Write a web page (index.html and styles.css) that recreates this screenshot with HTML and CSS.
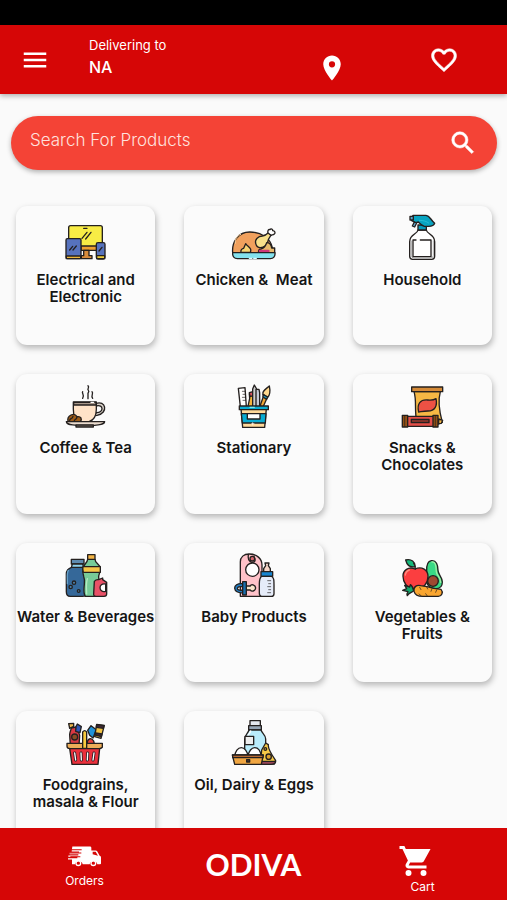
FILE: index.html
```html
<!DOCTYPE html>
<html lang="en">
<head>
<meta charset="utf-8">
<meta name="viewport" content="width=device-width, initial-scale=1">
<title>Odiva</title>
<link rel="stylesheet" href="styles.css">
</head>
<body>
<div class="status"></div>
<header class="topbar">
  <button class="icon-btn" type="button" aria-label="Menu"><svg class="ui-icon" viewBox="0 0 24 24"><path d="M3 18h18v-2H3v2zm0-5h18v-2H3v2zm0-7v2h18V6H3z"/></svg></button>
  <div class="delivery"><span class="delivery-label">Delivering to</span><span class="delivery-place">NA</span></div>
  <button class="icon-btn pin" type="button" aria-label="Location"><svg class="ui-icon" viewBox="0 0 24 24"><path d="M12 2C8.13 2 5 5.13 5 9c0 5.25 7 13 7 13s7-7.750 7-13c0-3.870-3.130-7-7-7zm0 9.500a2.500 2.500 0 1 1 0-5 2.500 2.500 0 0 1 0 5z"/></svg></button>
  <button class="icon-btn" type="button" aria-label="Wishlist"><svg class="ui-icon bold" viewBox="0 0 24 24"><path d="M16.500 3c-1.740 0-3.410.810-4.500 2.090C10.910 3.810 9.240 3 7.500 3 4.420 3 2 5.420 2 8.500c0 3.780 3.400 6.860 8.550 11.540L12 21.350l1.450-1.320C18.600 15.360 22 12.280 22 8.500 22 5.420 19.580 3 16.500 3zm-4.400 15.550l-.1.100-.1-.1C7.140 14.240 4 11.390 4 8.500 4 6.500 5.500 5 7.500 5c1.540 0 3.040.990 3.570 2.360h1.870C13.460 5.990 14.960 5 16.500 5c2 0 3.500 1.500 3.500 3.500 0 2.890-3.140 5.740-7.900 10.050z"/></svg></button>
</header>

<main class="content">
  <form class="search">
    <input class="search-input" type="text" placeholder="Search For Products" aria-label="Search For Products">
    <button class="icon-btn" type="button" aria-label="Search"><svg class="ui-icon bold" viewBox="0 0 24 24"><path d="M15.500 14h-.790l-.280-.270A6.470 6.470 0 0 0 16 9.500 6.500 6.500 0 1 0 9.500 16c1.610 0 3.090-.590 4.230-1.570l.270.280v.790l5 4.990L20.490 19l-4.990-5zm-6 0a4.500 4.500 0 1 1 0-9 4.500 4.500 0 0 1 0 9z"/></svg></button>
  </form>

  <div class="grid">
    <a class="card" href="#">
      <svg class="art" viewBox="185 54 144 144">
        <rect x="205" y="92" width="101" height="65" rx="6" fill="#f8ec45"/>
        <path d="M242 153h47v13h-47z" fill="#f0a030"/>
        <path d="M250 166h16v16h9v9h-32v-9h7z" fill="#d88b3c"/>
        <path d="M250 100h10M245 130l15-18M256 132l16-20"/>
        <rect x="197" y="131" width="45" height="60" rx="4" fill="#5672bd"/>
        <path d="M198 183h43v8h-43z" fill="#efb83a"/>
        <path d="M208 165l9-11M218 165l10-12"/>
        <rect x="288" y="143" width="26" height="49" rx="5" fill="#5672bd"/>
        <path d="M289 182h24v9h-24z" fill="#efcf3a"/>
        <path d="M296 168l9-11"/>
      </svg>
      <span class="name">Electrical and Electronic</span>
    </a>
    <a class="card" href="#">
      <svg class="art" viewBox="180 54 144 144">
        <path d="M188 173c-3-34 18-62 51-62 35 0 62 18 68 47l-5 15z" fill="#f0a05d"/>
        <path d="M196 145c-2-14 6-22 16-27" stroke="#fbd09a" stroke-width="3"/>
        <path d="M213 172c-2-7 3-11 8-12l6-14c4 7 12 10 15 17 1 4 0 7-1 9z" fill="#f7d373"/>
        <path d="M257 145c-3-13 8-21 20-22 9-1 13-5 18-10l8 8c-4 6-7 8-9 17-3 13-13 20-23 20-7 0-12-5-14-13z" fill="#f7e08b"/>
        <path d="M294 114c-2-7 2-12 6-10 3-5 9-1 8 3 7 0 9 7 5 10-4 4-7 2-10 4z" fill="#fff"/>
        <path d="M290 143c8 0 14 7 15 16h9v14h-48c-2-8 2-11 7-11 7-2 14-7 17-19z" fill="#e7b96b"/>
        <path d="M270 168h6M281 168h6M290 168h5" stroke="#ce3779" stroke-width="8"/>
        <path d="M188 173h127c1 12-5 18-14 18H202c-9 0-15-6-14-18z" fill="#83e2ee"/>
        <path d="M238 190h8M251 190h8" stroke="#d9fbff"/>
      </svg>
      <span class="name">Chicken &amp; &nbsp;Meat</span>
    </a>
    <a class="card" href="#">
      <svg class="art" viewBox="184 54 144 144">
        <path d="M244 105c-2 13-25 13-25 35v44q0 9 9 9h57q9 0 9-9v-44c0-22-23-22-25-35z" fill="#fff"/>
        <path d="M224 138v43q0 8 8 8h50q8 0 8-8v-43" stroke="#888" stroke-width="2"/>
        <path d="M238 135h-9v50h54v-50h-32" fill="#fff"/>
        <path d="M244 90h25v15h-25z" fill="#079bbb"/>
        <path d="M230 61h38c12 1 13 13 26 24-3 9-10 9-18 9h-13c-8-2-14-9-18-13l-8 2-12-6v-11z" fill="#08a4c1"/>
        <path d="M220 64h10v11h-10zM233 81l7 3-6 12-7-3z" fill="#5fa5cb"/>
        <path d="M248 76c13 0 21 3 28 8" stroke="#38c8dc" stroke-width="2"/>
      </svg>
      <span class="name">Household</span>
    </a>
    <a class="card" href="#">
      <svg class="art" viewBox="185 49 144 144">
        <path d="M263 63c6 6-4 9 1 14 4 5-1 7-1 9v16M247 81c-4 5 7 9 0 20M275 81c6 7-5 11 2 20"/>
        <path d="M286 117c30-12 40 28 4 35l-7 1 4-9c24 2 24-27 0-20z" fill="#d8d1c9"/>
        <path d="M219 112h69v22c0 20-9 33-22 37h-27c-17-4-20-18-20-37z" fill="#ffe3c8"/>
        <path d="M220 113h67v8h-67z" fill="#a7978a"/>
        <path d="M272 113h8" stroke="#fff"/>
        <path d="M203 170c-4-18 19-28 27-14 12-2 16 7 10 15z" fill="#9d5b16"/>
        <path d="M208 167c2-8 7-2 10-12M222 168c2-7 6-1 8-11"/>
        <path d="M198 171h115c-1 9-12 8-30 11h-54c-17-3-30-1-31-11z" fill="#eadbce"/>
        <path d="M227 181h52v6h-52z" fill="#9d9084"/>
      </svg>
      <span class="name">Coffee &amp; Tea</span>
    </a>
    <a class="card" href="#">
      <svg class="art" viewBox="180 49 144 144">
        <path d="M205 71l20-2 4 57h-18z" fill="#fff"/>
        <path d="M217 80h8M219 89h7M217 98h9M219 107h8" stroke-width="2"/>
        <path d="M238 88l11-4 4 13-4 29-15-1 5-24z" fill="#f4b53b"/>
        <path d="M238 84l11-3 3 11-12 4z" fill="#dd5060"/>
        <path d="M248 73l5-12 7 12v53h-12z" fill="#ccc"/>
        <path d="M258 74h9l2 10v42h-11z" fill="#c7cad6"/>
        <path d="M282 90l12 4-15 33-9-3z" fill="#f1a735"/>
        <path d="M279 89c-4-11 12-18 19-25 3 14 4 25-5 34z" fill="#ffd88d"/>
        <path d="M279 89l14 8-3 7-11-7z" fill="#209ec0"/>
        <path d="M213 132h76l-5 56h-66z" fill="#ffd99a"/>
        <path d="M214 147h74l-2 28h-69z" fill="#08acd3"/>
        <path d="M232 147h38v16h-38z" fill="#fff"/>
        <path d="M208 124h87v11h-87z" fill="#08acd3"/>
        <path d="M240 128h13" stroke="#7de8ed"/>
        <path d="M248 174v7M245 177h7" stroke="#fff" stroke-width="2"/>
      </svg>
      <span class="name">Stationary</span>
    </a>
    <a class="card" href="#">
      <svg class="art" viewBox="184 49 144 144">
        <path d="M232 81h79c-7 25-3 60 6 92l-11 5-65-4c-9-35 0-65-9-93z" fill="#f6b844"/>
        <path d="M225 67h93v14h-93z" fill="#d58a37"/>
        <path d="M246 142c-6-25 5-38 27-36 11 1 19 0 25-4 5 22-4 37-24 37-13 0-20 2-28 3z" fill="#ed5144"/>
        <path d="M306 163l12 4-4 9-8 1z" fill="#f6b844"/>
        <path d="M206 155h90v30h-90z" fill="#e44e48"/>
        <path d="M224 164h53v10h-53z" fill="#803229"/>
        <path d="M197 152h16v35h-16zM289 152h15v35h-15z" fill="#925116"/>
        <path d="M204 154v31M296 154v31" stroke-width="2"/>
      </svg>
      <span class="name">Snacks &amp; Chocolates</span>
    </a>
    <a class="card" href="#">
      <svg class="art" viewBox="185 44 144 144">
        <path d="M213 72h38v14h-38z" fill="#5e8bb0"/>
        <path d="M216 86h31l3 11h-37z" fill="#8ed0ec"/>
        <path d="M214 96h36c12 7 9 20 9 84-4 3-7 3-12 3h-37c-9 0-12-4-12-14v-53c0-13 7-17 16-20z" fill="#356899"/>
        <path d="M204 105c-6 10-2 26-3 40" stroke="#65a0c9"/>
        <path d="M262 58h22v15h-22z" fill="#f2b343"/>
        <path d="M262 72h22c0 12 14 14 16 26 1 14-6 18-5 28 0 10 4 16 4 26v31h-44c-7-10-4-24-3-36 1-10 1-16-2-24-3-9-4-16-2-25 3-12 13-16 14-26z" fill="#77cb98"/>
        <path d="M248 94h52v17h-51q-3-8-1-17z" fill="#f6c447"/>
        <path d="M261 130c-5 18-2 34-2 46" stroke="#b5eac3"/>
        <path d="M282 138q5-6 13-5l12-5v5l12 8v35q0 7-8 7h-24q-8 0-7-8z" fill="#e85167"/>
        <path d="M316 146c-23-5-22 28 0 22z" fill="#fff"/>
        <circle cx="211" cy="155" r="5" fill="#4f85ae"/><circle cx="221" cy="142" r="5" fill="#4f85ae"/><circle cx="235" cy="167" r="4" fill="#4f85ae"/>
      </svg>
      <span class="name">Water &amp; Beverages</span>
    </a>
    <a class="card" href="#">
      <svg class="art" viewBox="180 44 144 144">
        <path d="M211 183V80c0-14 10-24 27-24 22 0 38 14 38 33v94z" fill="#ffc2c9"/>
        <path d="M235 57c-2 13 1 21 10 24 15 1 10-12 7-17"/>
        <circle cx="247" cy="70" r="7" fill="#d9656d"/><circle cx="247" cy="103" r="20" fill="#fff"/>
        <path d="M281 109v-9l6-9-2-8h12l-2 8 6 9v9z" fill="#f5d5c7"/>
        <path d="M273 109h35v14h-35z" fill="#1684d0"/>
        <path d="M275 123h30c7 6 7 10 7 25v27q0 8-8 8h-29q-7 0-7-9v-29c0-12 1-17 7-22z" fill="#e6ecf9"/>
        <path d="M293 136h9M296 145h6M293 154h9M296 163h6M293 172h9" stroke-width="2"/>
        <path d="M219 145c-35-4-32 32 1 27l-2-8c-21 4-21-13 0-10z" fill="#207cc1"/>
        <path d="M227 152h14c2-7 15-4 16 6-1 10-13 12-16 6h-14z" fill="#f9e4cb"/>
        <path d="M218 139h11v40h-11z" fill="#176eb0"/>
      </svg>
      <span class="name">Baby Products</span>
    </a>
    <a class="card" href="#">
      <svg class="art" viewBox="184 44 144 144">
        <path d="M270 109c-1-17 1-31 14-33 15-2 20 13 20 29 0 13 13 19 13 35 0 14-9 20-20 20-20 0-29-14-27-31z" fill="#38d985"/>
        <path d="M286 80c12-2 12 15 13 29 1 12 14 19 13 32" stroke="#9ff0a5" stroke-width="4"/>
        <circle cx="289" cy="137" r="16" fill="#9e4931"/>
        <path d="M235 101c21-10 39 4 39 22 0 20-14 37-31 37-7 0-9-2-15 0-17-1-29-20-29-37-1-17 17-31 36-22z" fill="#fb3e40"/>
        <path d="M236 101c-1-8-1-13-5-17M207 74c17-5 29 7 29 20-14 3-25-4-29-20z" fill="#15b87b"/>
        <path d="M206 119c1-9 6-13 12-15" stroke="#ff8a7e"/>
        <path d="M231 166c-8 7-14 7-19 15-2-5-1-8 2-12l-16-4 12-5-6-10 15 5 2-7c5 3 8 8 10 18z" fill="#12a96d"/>
        <path d="M232 168c-2-14 8-20 20-17l19 3c12 4 22 7 42 8 8 9 2 21-8 21h-42c-16 1-28-4-31-15z" fill="#faa630"/>
        <path d="M249 156l4 7M247 176l6 5M270 155l3 6M267 175l5 7M286 160l-3 8M300 164l-3 7" stroke-width="2"/>
      </svg>
      <span class="name">Vegetables &amp; Fruits</span>
    </a>
    <a class="card" href="#">
      <svg class="art" viewBox="185 54 144 144">
        <path d="M208 104c1-12 4-13 5-20l14-3c1 11 8 13 11 25l-2 30h-26z" fill="#d93843"/>
        <path d="M205 71l15-1v9l-12 6z" fill="#edb64a"/><circle cx="223" cy="111" r="9" fill="#894c24"/>
        <path d="M227 80l4-8 12 8-4 18-13-4z" fill="#2e56b5"/>
        <path d="M262 91l10-14 16 12-10 25-10-8z" fill="#2092d8"/>
        <path d="M289 73l23 3-10 39-19-5z" fill="#f2c345"/>
        <path d="M289 74l22 3-2 8-21-3zM286 99l19 3-2 8-18-5z" fill="#3e2636"/>
        <path d="M260 132c1-16 12-22 20-9l2 9z" fill="#e33e38"/>
        <path d="M208 145h90l-5 48h-78z" fill="#eb303c"/>
        <path d="M200 130h106v12q-4 4-9 4h-88q-9 0-9-7z" fill="#edad58"/>
        <path d="M247 96q6-8 12 0v49h-12z" fill="#f8ca3d"/>
        <g stroke="#291b22" stroke-width="9"><path d="M223 159l3 21M242 159l1 21M262 159l-1 21M281 159l-3 21"/></g>
        <g stroke="#fff" stroke-width="4"><path d="M223 159l3 21M242 159l1 21M262 159l-1 21M281 159l-3 21"/></g>
      </svg>
      <span class="name">Foodgrains, masala &amp; Flour</span>
    </a>
    <a class="card" href="#">
      <svg class="art" viewBox="690 54 144 144">
        <path d="M750 62h31v17h-31z" fill="#e5e8ef"/>
        <path d="M746 77h38v13h-38z" fill="#96a5b5"/>
        <path d="M747 90h36c2 9 14 14 14 27v63h-63v-62c1-14 10-17 13-28z" fill="#b9ecfb"/>
        <path d="M752 93c-2 8-8 10-8 15" stroke="#fff"/>
        <path d="M735 109h26v25h-26z" fill="#eee"/>
        <path d="M785 150l12-21 8 5c-2 14 13 34 22 47l-4 11h-42z" fill="#f6c947"/>
        <path d="M785 184h42c0 6-7 9-15 9h-30z" fill="#974457"/>
        <circle cx="806" cy="170" r="8" fill="#dda22f"/><circle cx="796" cy="147" r="4" fill="#dda22f"/>
        <path d="M704 170c1-16 10-27 20-27s18 11 20 25c2-15 11-25 20-25 11 0 18 12 20 27z" fill="#fff"/>
        <path d="M697 165h93l-6 28h-80z" fill="#f0a642"/>
        <path d="M698 165h91v8h-91z" fill="#b76a31"/>
        <path d="M740 186v-7h9v7z" fill="#4f3328"/>
      </svg>
      <span class="name">Oil, Dairy &amp; Eggs</span>
    </a>
  </div>
</main>

<nav class="bottom">
  <a class="tab" href="#">
    <svg class="truck" viewBox="207 80 99 62">
      <path fill="#fff" d="M220 81h53q4 0 4 4v8h13q3 0 5 3l7 13q4 1 4 5v18q0 2-3 2h-8a12 12 0 0 0-23 0h-21a12 12 0 0 0-23 0h-9v-14h-12v-4h28v-4h-27v-4h30v-4h-26v-4h28v-4h-22z"/>
      <path fill="#d60606" d="M281 97h9l7 12-16-5zM217 89h31v3h-31zM212 99h35v3h-35zM214 110h30v3h-30z"/>
      <circle cx="238" cy="131" r="7" fill="none" stroke="#fff" stroke-width="4"/>
      <circle cx="283" cy="131" r="7" fill="none" stroke="#fff" stroke-width="4"/>
    </svg>
    <span>Orders</span>
  </a>
  <a class="brand" href="#">ODIVA</a>
  <a class="tab" href="#">
    <svg class="cart" viewBox="0 0 24 24"><path d="M7 18a2 2 0 1 0 0 4 2 2 0 0 0 0-4zM1 2v2h2l3.600 7.590-1.350 2.450C4.520 15.370 5.480 17 7 17h12v-2H7.420a.25.25 0 0 1-.22-.37L8.100 13h7.450c.750 0 1.410-.410 1.750-1.030L21.700 4H5.210l-.94-2H1zm16 16a2 2 0 1 0 0 4 2 2 0 0 0 0-4z"/></svg>
    <span>Cart</span>
  </a>
</nav>
</body>
</html>
```
FILE: styles.css
```css
* { box-sizing: border-box; }

body {
  margin: 0;
  height: 100vh;
  display: flex;
  flex-direction: column;
  overflow: hidden;
  background: #fafafa;
  color: #151515;
  font-family: Inter, "Liberation Sans", sans-serif;
}

a { color: inherit; text-decoration: none; }

.status { flex: none; height: 25px; background: #000; }

.topbar {
  flex: none;
  height: 69px;
  display: flex;
  align-items: center;
  padding: 0 48px 0 20px;
  background: #d60606;
  color: #fff;
  box-shadow: 0 2px 5px rgba(0, 0, 0, 0.3);
}

.icon-btn {
  flex: none;
  display: flex;
  padding: 0;
  border: 0;
  background: none;
  color: #fff;
}

.ui-icon { width: 30px; height: 30px; fill: currentColor; }
.bold { stroke: currentColor; stroke-width: 0.4; }

.pin { padding-top: 16px; margin-right: 82px; }

.delivery {
  flex: 1;
  display: flex;
  flex-direction: column;
  gap: 2px;
  margin-left: 39px;
  padding-bottom: 8px;
}

.delivery-label { font-size: 13px; line-height: 20px; }
.delivery-place { font-size: 16px; line-height: 20px; font-weight: 500; }

.content { flex: 1; min-height: 0; overflow: hidden; padding-top: 22px; }

.search {
  display: flex;
  align-items: center;
  height: 54px;
  margin: 0 10px 0 11px;
  padding: 0 19px;
  border-radius: 27px;
  background: #f44336;
  box-shadow: 0 2px 5px rgba(0, 0, 0, 0.3);
}

.search-input {
  flex: 1;
  min-width: 0;
  padding: 0 0 6px;
  border: 0;
  outline: 0;
  background: none;
  color: #fff;
  font: 300 17px/24px Inter, "Liberation Sans", sans-serif;
}

.search-input::placeholder { color: #ffe2df; opacity: 1; }

.grid {
  display: grid;
  grid-template-columns: repeat(3, minmax(0, 1fr));
  gap: 29px;
  padding: 36px 15px 29px 16px;
}

.card {
  aspect-ratio: 1;
  display: flex;
  flex-direction: column;
  align-items: center;
  padding-top: 7px;
  border-radius: 11px;
  background: #fbfbfb;
  box-shadow: 1px 3px 6px rgba(0, 0, 0, 0.28);
}

.art {
  flex: none;
  width: 48px;
  height: 48px;
  fill: none;
  stroke: #24201f;
  stroke-width: 4;
  stroke-linecap: round;
  stroke-linejoin: round;
}

.name {
  margin-top: 10px;
  font-size: 15px;
  line-height: 17px;
  font-weight: 600;
  text-align: center;
}

.bottom {
  flex: none;
  height: 72px;
  display: grid;
  grid-template-columns: repeat(3, 1fr);
  background: #d60606;
  color: #fff;
}

.tab {
  display: flex;
  flex-direction: column;
  align-items: center;
  padding-top: 15px;
  font-size: 12px;
  line-height: 16px;
}

.truck { width: 33px; height: 21px; margin: 3px 0 6px; }
.cart { width: 36px; height: 36px; margin-right: 14px; fill: currentColor; }

.brand {
  align-self: center;
  text-align: center;
  font: 700 30px/36px Lato, "Liberation Sans", sans-serif;
}
```
